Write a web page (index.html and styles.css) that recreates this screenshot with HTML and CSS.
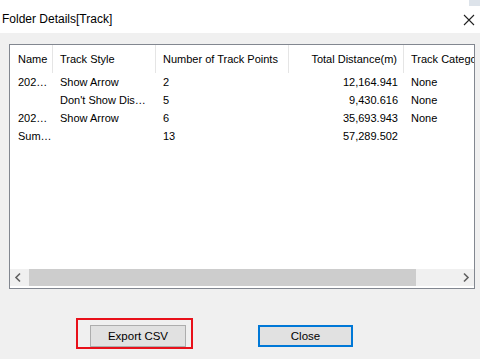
FILE: index.html
```html
<!DOCTYPE html>
<html>
<head>
<meta charset="utf-8">
<link rel="stylesheet" href="styles.css">
</head>
<body>
<div class="dialog">
  <div class="titlebar">
    <span class="title">Folder Details[Track]</span>
    <svg class="close-x" width="12" height="12" viewBox="0 0 12 12"><path d="M1 1 L11 11 M11 1 L1 11" stroke="#222" stroke-width="1.1" fill="none"/></svg>
    <div class="corner"></div>
  </div>
  <div class="content">
    <div class="listbox">
      <div class="grid">
        <div class="row head">
          <div class="c c1">Name</div>
          <div class="c c2">Track Style</div>
          <div class="c c3">Number of Track Points</div>
          <div class="c c4 r">Total Distance(m)</div>
          <div class="c c5">Track Category</div>
        </div>
        <div class="row">
          <div class="c c1">202…</div>
          <div class="c c2">Show Arrow</div>
          <div class="c c3">2</div>
          <div class="c c4 r">12,164.941</div>
          <div class="c c5">None</div>
        </div>
        <div class="row">
          <div class="c c1"></div>
          <div class="c c2">Don't Show Dis…</div>
          <div class="c c3">5</div>
          <div class="c c4 r">9,430.616</div>
          <div class="c c5">None</div>
        </div>
        <div class="row">
          <div class="c c1">202…</div>
          <div class="c c2">Show Arrow</div>
          <div class="c c3">6</div>
          <div class="c c4 r">35,693.943</div>
          <div class="c c5">None</div>
        </div>
        <div class="row">
          <div class="c c1">Sum…</div>
          <div class="c c2"></div>
          <div class="c c3">13</div>
          <div class="c c4 r">57,289.502</div>
          <div class="c c5"></div>
        </div>
      </div>
      <div class="hscroll">
        <svg class="arrow" width="17" height="17" viewBox="0 0 17 17"><path d="M10 4.5 L6 8.5 L10 12.5" stroke="#606060" stroke-width="1.6" fill="none"/></svg>
        <div class="track"><div class="thumb"></div></div>
        <svg class="arrow" width="17" height="17" viewBox="0 0 17 17"><path d="M7 4.5 L11 8.5 L7 12.5" stroke="#606060" stroke-width="1.6" fill="none"/></svg>
      </div>
    </div>
    <div class="buttons">
      <div class="highlight"><button class="btn">Export CSV</button></div>
      <button class="btn default">Close</button>
    </div>
  </div>
</div>
</body>
</html>
```

FILE: styles.css
```css
html, body {
  margin: 0;
  padding: 0;
}
body {
  width: 480px;
  height: 359px;
  overflow: hidden;
  font-family: "Liberation Sans", Arial, sans-serif;
  font-size: 11px;
  color: #000;
  background: #f0f0f0;
}
.dialog {
  display: flex;
  flex-direction: column;
  height: 359px;
}
.titlebar {
  position: relative;
  height: 33px;
  background: #fff;
  display: flex;
  align-items: center;
  justify-content: space-between;
  padding: 0 6px 0 2px;
  flex: none;
}
.title {
  font-size: 12px;
  color: #000;
  margin-top: 4px;
}
.close-x {
  margin-top: 6px;
  margin-right: -1px;
}
.corner {
  position: absolute;
  right: 0;
  top: 0;
  width: 11px;
  height: 6px;
  background: #dde3ea;
}
.content {
  flex: 1;
  background: #f0f0f0;
  padding: 11px 0 0 9px;
}
.listbox {
  width: 464px;
  height: 243px;
  border: 1px solid #828790;
  background: #fff;
  display: flex;
  flex-direction: column;
  overflow: hidden;
}
.grid {
  flex: 1;
  overflow: hidden;
}
.row {
  display: flex;
  height: 18px;
  align-items: center;
  white-space: nowrap;
}
.row.head {
  height: 28px;
}
.c {
  flex: none;
  padding-left: 8px;
  box-sizing: border-box;
  overflow: hidden;
  height: 100%;
  display: flex;
  align-items: center;
}
.head .c {
  border-right: 1px solid #e5e5e5;
}
.c1 { width: 43px; }
.c2 { width: 103px; padding-left: 7px; }
.c3 { width: 133px; padding-left: 7px; }
.c4 { width: 115px; }
.c5 { width: 70px; padding-left: 7px; }
.head .c5 { border-right: none; }
.c.r {
  justify-content: flex-end;
  padding-left: 0;
  padding-right: 6px;
}
.hscroll {
  flex: none;
  height: 17px;
  display: flex;
  align-items: stretch;
  background: #f0f0f0;
  margin-bottom: 2px;
}
.arrow {
  flex: none;
  width: 17px;
  height: 17px;
}
.track {
  flex: 1;
  padding: 0 2px;
  display: flex;
}
.thumb {
  width: 387px;
  background: #cdcdcd;
}
.buttons {
  display: flex;
  align-items: flex-end;
  padding: 29px 0 0 67px;
  gap: 65px;
}
.highlight {
  border: 2px solid #e8101a;
  padding: 5px 5px 0 12px;
  display: flex;
}
.btn {
  font-family: "Liberation Sans", Arial, sans-serif;
  font-size: 11.5px;
  width: 96px;
  height: 22px;
  background: #e1e1e1;
  border: 1px solid #adadad;
  padding: 0;
  margin: 0;
  color: #000;
}
.btn.default {
  width: 95px;
  border: 2px solid #0078d7;
  margin-bottom: 2px;
}
```
